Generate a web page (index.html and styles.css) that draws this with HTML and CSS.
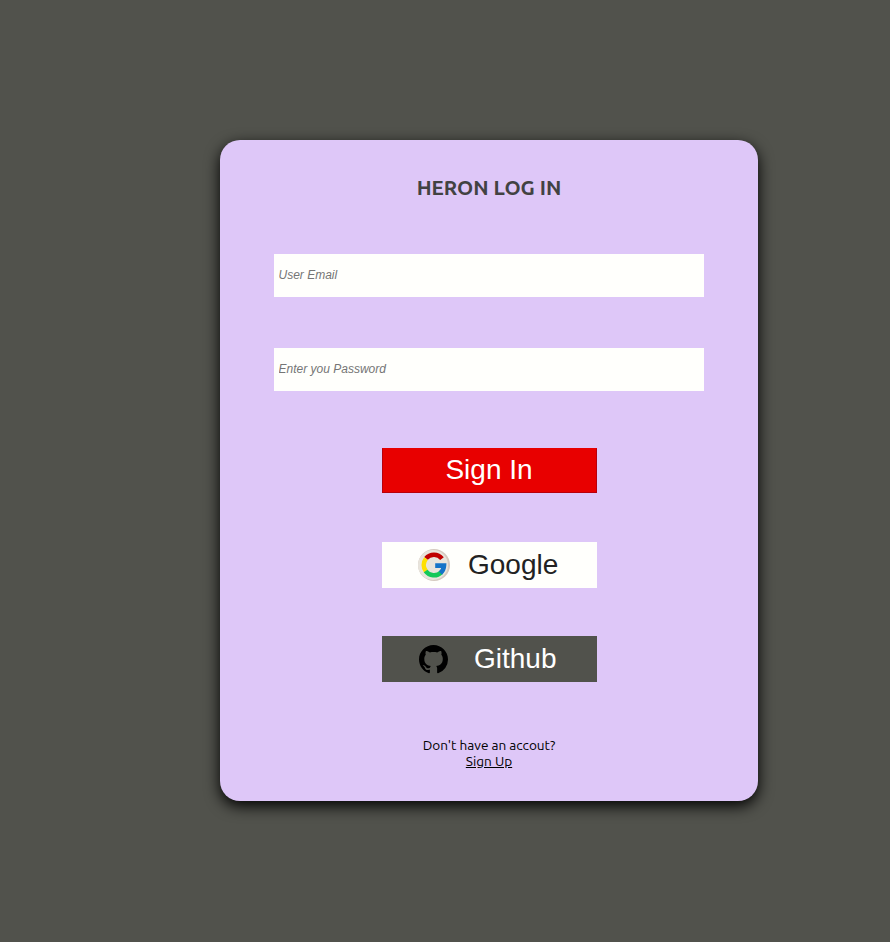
FILE: index.html
```html
<!DOCTYPE html>
<html lang="en">
<head>
<meta charset="utf-8">
<title>Heron Log In</title>
<link rel="stylesheet" href="styles.css">
</head>
<body>
<main class="card">
  <h1 class="title"><span>HERON LOG IN</span></h1>
  <form class="form">
    <input class="field" type="email" placeholder="User Email">
    <input class="field" type="password" placeholder="Enter you Password">
    <button class="btn signin" type="button">Sign In</button>
    <button class="btn google" type="button">
      <svg class="icon" viewBox="0 0 32 32" aria-hidden="true">
        <circle cx="16" cy="16" r="16" fill="#d5cac0"/>
        <circle cx="15" cy="16" r="15" fill="#e8e4dc"/>
        <g fill="none" stroke-width="4.6">
          <path d="M8 9.4A10.3 10.3 0 0 1 24 9.6" stroke="#c00000"/>
          <path d="M8 22.4A10.3 10.3 0 0 1 8 9.6" stroke="#ffe000"/>
          <path d="M23.2 23.3A10.3 10.3 0 0 1 7.6 22" stroke="#14c858"/>
          <path d="M17.2 16.6H26A10.3 10.3 0 0 1 22.4 23.9" stroke="#1473c8"/>
        </g>
      </svg>
      <span>Google</span>
    </button>
    <button class="btn github" type="button">
      <svg class="icon" viewBox="0 0 16 16" aria-hidden="true">
        <path d="M8 0C3.58 0 0 3.58 0 8c0 3.54 2.29 6.53 5.47 7.59.4.07.55-.17.55-.38 0-.19-.01-.82-.01-1.49-2.01.37-2.53-.49-2.69-.94-.09-.23-.48-.94-.82-1.13-.28-.15-.68-.52-.01-.53.63-.01 1.08.58 1.23.82.72 1.21 1.87.87 2.33.66.07-.52.28-.87.51-1.07-1.78-.2-3.64-.89-3.64-3.95 0-.87.31-1.59.82-2.15-.08-.2-.36-1.02.08-2.12 0 0 .67-.21 2.2.82.64-.18 1.32-.27 2-.27s1.36.09 2 .27c1.53-1.04 2.2-.82 2.2-.82.44 1.1.16 1.92.08 2.12.51.56.82 1.27.82 2.15 0 3.07-1.87 3.75-3.65 3.95.29.25.54.73.54 1.48 0 1.07-.01 1.93-.01 2.2 0 .21.15.46.55.38A8.01 8.01 0 0 0 16 8c0-4.42-3.58-8-8-8z"/>
      </svg>
      <span>Github</span>
    </button>
  </form>
  <p class="signup"><span class="question">Don't have an accout?</span><a href="#">Sign Up</a></p>
</main>
</body>
</html>
```
FILE: styles.css
```css
* { box-sizing: border-box; }
body {
  margin: 0;
  height: 942px;
  padding: 140px 132px 0 220px;
  background: #51524c;
  font-family: Ubuntu, "Noto Sans", sans-serif;
  overflow: hidden;
}
.card {
  display: flex;
  flex-direction: column;
  align-items: center;
  width: 538px;
  height: 661px;
  padding-top: 34px;
  border-radius: 20px;
  background: #dec7f8;
  box-shadow: 0 5px 15px #000;
}
.title {
  margin: 0 0 52px;
  font-size: 20.6px;
  line-height: 28px;
  font-weight: 700;
  color: #424242;
}
.form {
  display: flex;
  flex-direction: column;
  align-items: center;
}
.field {
  width: 430px;
  height: 43px;
  margin-bottom: 51px;
  padding: 0 4.5px 2px;
  border: 0;
  border-radius: 0;
  background: #fffffc;
  font: italic 12px "Liberation Sans", sans-serif;
}
.field::placeholder { color: #757575; }
.btn {
  display: flex;
  align-items: center;
  width: 215px;
  height: 46px;
  margin-bottom: 48px;
  padding: 0;
  border: 0;
  font: 28px "Liberation Sans", sans-serif;
}
.signin {
  justify-content: center;
  height: 45px;
  margin: 6px 0 49px;
  padding-bottom: 2px;
  border: 1px solid #b8000c;
  border-top-color: #e80000;
  background: #e80000;
  color: #fff;
}
.google { background: #fffffc; color: #222; }
.google .icon { width: 32px; height: 32px; margin: 0 18.5px 0 36px; }
.github { background: #51524c; color: #fff; }
.github .icon { width: 29px; height: 29px; margin: 1px 26.5px 0 37px; }
.signup {
  display: flex;
  flex-direction: column;
  align-items: center;
  margin: 7px 0 0;
  font-size: 13.6px;
  line-height: 16px;
  color: #000;
}
.signup a { color: inherit; }
```
